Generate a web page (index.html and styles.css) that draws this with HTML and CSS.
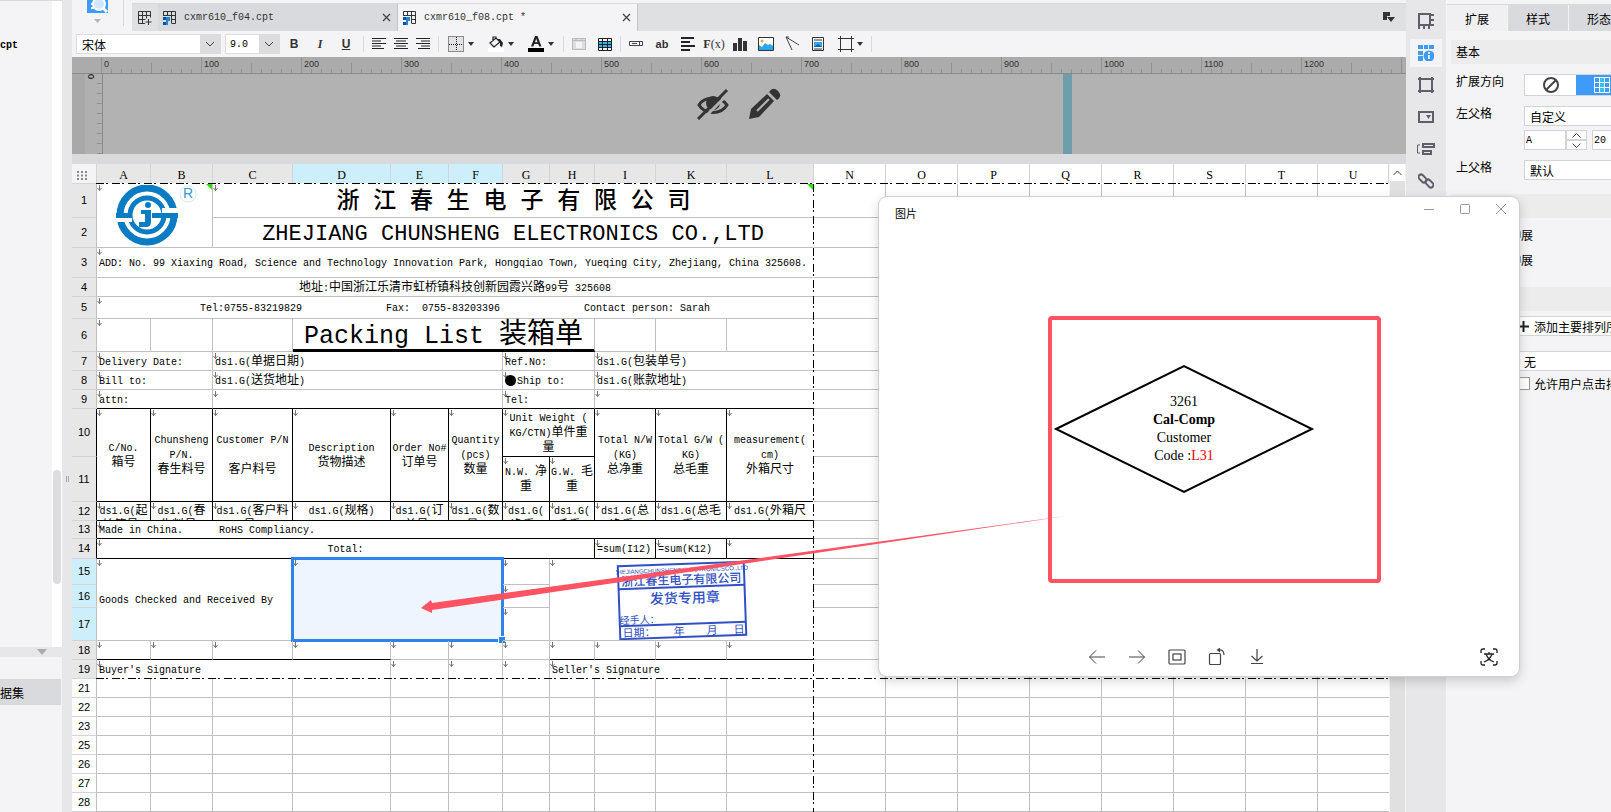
FILE: index.html
```html
<!DOCTYPE html>
<html lang="zh-CN">
<head>
    <meta charset="UTF-8">
    <meta name="viewport" content="width=device-width, initial-scale=1.0">
    <title>cxmr610_f08.cpt</title>
    <link rel="stylesheet" href="styles.css">
</head>
<body>
    <div class="app">
        <!-- File tree -->
        <aside class="tree">
            <div class="tree-files">
                <div class="tree-list"><b class="mono">cpt</b></div>
                <div class="tree-scroll"><div class="tree-thumb"></div></div>
            </div>
            <div class="tree-split"><svg width="10" height="6" viewBox="0 0 10 6"><path d="M0 0h10L5 6z" fill="#aaa"/></svg></div>
            <div class="tree-data"><button class="dataset">据集</button></div>
        </aside>
        <div class="splitter"><i></i><i></i></div>

        <main class="main">
            <div class="top">
                <button class="preview" aria-label="预览">
                    <svg width="22" height="26" viewBox="0 0 22 26"><rect width="21" height="13" fill="#3f9bfa"/><path d="M4 4h6M4 8h4" stroke="#fff" stroke-width="2"/><circle cx="12" cy="4" r="6" fill="#cfe6fb" stroke="#fff" stroke-width="2"/><path d="M16 8l4 4" stroke="#fff" stroke-width="3"/><path d="M7 19h7l-3.500 4z" fill="#b4b4b6"/></svg>
                </button>
                <div class="tabs">
                    <button class="tab-new" aria-label="新建">
                        <svg width="14" height="14" viewBox="0 0 14 14" fill="none" stroke="#333"><path d="M7 12.500H.5V.5h12v6M.5 4.500h12M.5 8.500h7M4.500 .5v12M8.500 .5v7M10.500 8v6M7.500 11h6"/></svg>
                    </button>
                    <button class="tab">
                        <svg width="14" height="14" viewBox="0 0 14 14" fill="none" stroke="#333"><path d="M.5 5V.5h12v12H9M.5 4.500h12M8.500 8.500h4M4.500 .5v4M8.500 .5v12"/><path d="M0 6h3v3H0zM1 11h2v3H0v-3z" fill="#0e4f9e" stroke="none"/><path d="M3 6h4v4H5v4H3z" fill="#1f86dc" stroke="none"/></svg>
                        <span class="mono">cxmr610_f04.cpt</span>
                        <svg class="tab-x" width="9" height="9" viewBox="0 0 9 9" stroke="#444" stroke-width="1.300"><path d="M1 1l7 7M8 1L1 8"/></svg>
                    </button>
                    <button class="tab active">
                        <svg width="14" height="14" viewBox="0 0 14 14" fill="none" stroke="#333"><path d="M.5 5V.5h12v12H9M.5 4.500h12M8.500 8.500h4M4.500 .5v4M8.500 .5v12"/><path d="M0 6h3v3H0zM1 11h2v3H0v-3z" fill="#0e4f9e" stroke="none"/><path d="M3 6h4v4H5v4H3z" fill="#1f86dc" stroke="none"/></svg>
                        <span class="mono">cxmr610_f08.cpt *</span>
                        <svg class="tab-x" width="9" height="9" viewBox="0 0 9 9" stroke="#444" stroke-width="1.300"><path d="M1 1l7 7M8 1L1 8"/></svg>
                    </button>
                    <button class="tab-menu" aria-label="标签列表">
                        <svg width="12" height="11" viewBox="0 0 12 11"><path d="M0 0h7v4H4v4H0zM4 5h8l-4 5z" fill="#333"/></svg>
                    </button>
                </div>
            </div>

            <div class="toolbar">
                <select class="font-name" aria-label="字体"><option>宋体</option></select>
                <select class="font-size" aria-label="字号"><option>9.0</option></select>
                <div class="tools letters">
                    <button><b>B</b></button>
                    <button><em>I</em></button>
                    <button><u>U</u></button>
                </div>
                <span class="sep"></span>
                <div class="tools aligns">
                    <button aria-label="左对齐"><svg width="16" height="12" viewBox="0 0 16 12" stroke="#222"><path d="M1 .5h14M1 3h9M1 5.500h14M1 8h9M1 10.500h12"/></svg></button>
                    <button aria-label="居中"><svg width="16" height="12" viewBox="0 0 16 12" stroke="#222"><path d="M1 .5h14M3 3h10M1 5.500h14M3 8h10M1 10.500h14"/></svg></button>
                    <button aria-label="右对齐"><svg width="16" height="12" viewBox="0 0 16 12" stroke="#222"><path d="M1 .5h14M6 3h9M1 5.500h14M6 8h9M3 10.500h12"/></svg></button>
                </div>
                <span class="sep"></span>
                <div class="tools drops">
                    <button aria-label="边框"><svg width="16" height="16" viewBox="0 0 16 16"><path d="M1 1h14v14H1z" fill="#e2e2e4"/><path d="M.5 .5h15v15H.5zM8.500 1v14M1 8.500h14" fill="none" stroke="#222" stroke-dasharray="1 1"/></svg><i class="tri"></i></button>
                    <button aria-label="填充"><svg width="16" height="16" viewBox="0 0 16 16"><rect y="12" width="16" height="4" fill="#fff"/><path d="M2 7l6-5 4 4-6 5zM5 5V1h3v2" fill="none" stroke="#222" stroke-width="1.200"/><path d="M9 3h3l3 4-1 4-2-1V6z" fill="#222"/></svg><i class="tri"></i></button>
                    <button aria-label="字体颜色"><svg width="16" height="16" viewBox="0 0 16 16"><rect y="12" width="16" height="4"/><path d="M3 10.500L7 0h2.500l4 10.500h-2.300l-1-2.500H6.300l-1 2.500zM7 6.200h2.500L8.200 2.800z" fill="#222"/></svg><i class="tri"></i></button>
                </div>
                <span class="sep"></span>
                <div class="tools">
                    <button aria-label="单元格"><svg width="16" height="16" viewBox="0 0 16 16"><path d="M1.500 2.500h13v11h-13z" fill="#ddd" stroke="#bbb"/><path d="M1 4.500h14M5 2v2M11 2v2" stroke="#bbb"/><rect x="5" y="6" width="6" height="6" fill="#f4f4f6"/></svg></button>
                    <button aria-label="表格"><svg width="16" height="16" viewBox="0 0 16 16"><rect x="1" y="5" width="14" height="7" fill="#38b4f5"/><path d="M1.500 2.500h13v12h-13zM1 5.500h14M1 8.500h14M1 11.500h14M5.500 2v12M10.500 2v12" fill="none" stroke="#222"/></svg></button>
                </div>
                <span class="sep"></span>
                <div class="tools">
                    <button aria-label="文本框"><svg width="16" height="16" viewBox="0 0 16 16" fill="none" stroke="#444"><path d="M1.500 5.500h13v4h-13zM4 7.500h5M11.500 5v5"/></svg></button>
                    <button class="ab"><b>ab</b></button>
                    <button aria-label="段落"><svg width="16" height="16" viewBox="0 0 16 16" stroke="#222" stroke-width="2"><path d="M1 2h13M1 6h9M1 10h14M1 14h9"/></svg></button>
                    <button class="fx"><b>F</b>(x)</button>
                    <button aria-label="图表"><svg width="16" height="16" viewBox="0 0 16 16"><path d="M1 7h4v8H1zM6 2h4v13H6zM11 5h4v10h-4z" fill="#333"/></svg></button>
                    <button aria-label="图片"><svg width="16" height="16" viewBox="0 0 16 16"><path d="M.5 1.500h15v13H.5z" fill="#fff" stroke="#333"/><path d="M1 14V9l3 2 3-4 3 2 2-1 3 2v4z" fill="#2fa5ec"/><circle cx="4" cy="5" r="1.500" fill="#f3a73b"/></svg></button>
                    <button aria-label="斜线"><svg width="16" height="16" viewBox="0 0 16 16" fill="none" stroke="#444"><path d="M2 1l6 13M2 1l13 8M2 1h3"/></svg></button>
                    <button aria-label="子报表"><svg width="16" height="16" viewBox="0 0 16 16"><path d="M2.500 1.500h11v13h-11z" fill="#fff" stroke="#333"/><path d="M4 4h8M4 13h8" stroke="#333"/><path d="M4 6h8v5H4z" fill="#38a4ef"/><path d="M4 11l4-3 4 3z" fill="#155fa8"/></svg></button>
                    <button class="float" aria-label="悬浮"><svg width="16" height="16" viewBox="0 0 16 16" fill="none" stroke="#333"><path d="M2.500 0v16M13.500 0v16M0 2.500h16M0 13.500h16"/></svg><i class="tri"></i></button>
                </div>
                <span class="sep"></span>
            </div>

            <!-- Parameter pane with rulers -->
            <div class="pane">
                <div class="ruler">
                    <span>0</span><span>100</span><span>200</span><span>300</span><span>400</span><span>500</span><span>600</span><span>700</span><span>800</span><span>900</span><span>1000</span><span>1100</span><span>1200</span><span></span>
                </div>
                <div class="pane-body">
                    <div class="vruler"><span>0</span></div>
                    <div class="pane-canvas">
                        <button aria-label="隐藏">
                            <svg width="32" height="32" viewBox="0 0 32 32"><path d="M2 17C7 8 24 8 30 17C24 27 8 27 2 17z" fill="none" stroke="#333" stroke-width="3"/><circle cx="16" cy="15" r="7" fill="#333"/><path d="M4 33L33 4" stroke="#b2b2b2" stroke-width="3"/><path d="M1 31L30 2" stroke="#333" stroke-width="3"/></svg>
                        </button>
                        <button aria-label="编辑">
                            <svg width="32" height="32" viewBox="0 0 32 32"><path d="M0 31l2-10L18 6l7 7L10 29z" fill="#333"/><path d="M20 4q4-6 9-1t-1 9z" fill="#333"/><path d="M8 23L20 11" stroke="#b2b2b2" stroke-width="2"/></svg>
                        </button>
                    </div>
                    <div class="pane-edge"></div>
                    <div class="pane-rest"></div>
                </div>
            </div>

            <!-- Report sheet -->
            <div class="sheet-wrap">
                <div class="sheet">
                    <table class="grid">
                        <colgroup>
                            <col class="c-no"><col class="c-a"><col class="c-b"><col class="c-c"><col class="c-d"><col class="c-e"><col class="c-f"><col class="c-g"><col class="c-h"><col class="c-i"><col class="c-k"><col class="c-l">
                            <col class="c-n"><col class="c-n"><col class="c-n"><col class="c-n"><col class="c-n"><col class="c-n"><col class="c-n"><col>
                        </colgroup>
                        <thead>
                            <tr>
                                <th class="corner"><svg width="11" height="9" viewBox="0 0 11 9" stroke="#888" stroke-width="2" stroke-dasharray="2 2"><path d="M0 1h11M0 4.500h11M0 8h11"/></svg></th>
                                <th>A</th><th>B</th><th>C</th><th class="on">D</th><th class="on">E</th><th class="on">F</th><th>G</th><th>H</th><th>I</th><th>K</th><th>L</th>
                                <th class="out">N</th><th class="out">O</th><th class="out">P</th><th class="out">Q</th><th class="out">R</th><th class="out">S</th><th class="out">T</th><th class="out">U</th>
                            </tr>
                        </thead>
                        <tbody>
                            <tr class="h34">
                                <th>1</th>
                                <td class="m logo-cell" colspan="2" rowspan="2">
                                    <svg width="106" height="62" viewBox="0 0 106 62">
                                        <g fill="none" stroke="#0a7cc4">
                                            <circle cx="50" cy="30" r="27" stroke-width="7"/>
                                            <circle cx="50" cy="30" r="17" stroke-width="5"/>
                                        </g>
                                        <path d="M65 23h18v5H65zM17 33h18v4H17z" fill="#fff"/>
                                        <path d="M19 28h16v5H19zM55 28h26v5H55z" fill="#0a7cc4"/>
                                        <circle cx="51" cy="20" r="3" fill="#0a7cc4"/>
                                        <path d="M44 25h10v12q0 5-5 5h-7v-5h6v-8h-4z" fill="#0a7cc4"/>
                                        <circle cx="91" cy="9" r="8" fill="none" stroke="#d5e9f5"/>
                                        <text x="86" y="13" class="reg">R</text>
                                    </svg>
                                    <i class="flag"></i>
                                </td>
                                <td class="m name-zh" colspan="9">浙 江 春 生 电 子 有 限 公 司<i class="flag"></i></td>
                                <td class="rest" colspan="8"></td>
                            </tr>
                            <tr class="h30"><th>2</th><td class="name-en" colspan="9">ZHEJIANG CHUNSHENG ELECTRONICS CO.,LTD</td><td class="rest" colspan="8"></td></tr>
                            <tr class="h30"><th>3</th><td class="m" colspan="11">ADD: No. 99 Xiaxing Road, Science and Technology Innovation Park, Hongqiao Town, Yueqing City, Zhejiang, China 325608.</td><td class="rest" colspan="8"></td></tr>
                            <tr><th>4</th><td class="mid" colspan="11"><span class="zh">地址</span>:<span class="zh">中国浙江乐清市虹桥镇科技创新园霞兴路</span>99<span class="zh">号</span> 325608</td><td class="rest" colspan="8"></td></tr>
                            <tr class="h22"><th>5</th><td class="m mid" colspan="11">Tel:0755-83219829              Fax:  0755-83203396              Contact person: Sarah</td><td class="rest" colspan="8"></td></tr>
                            <tr class="h33"><th>6</th><td class="m"></td><td></td><td></td><td class="doc-title" colspan="5">Packing List <span>装箱单</span></td><td></td><td></td><td></td><td class="rest" colspan="8"></td></tr>
                            <tr><th>7</th><td class="m" colspan="2">Delivery Date:</td><td class="m" colspan="4">ds1.G(<span class="zh">单据日期</span>)</td><td class="m" colspan="2">Ref.No:</td><td class="m" colspan="3">ds1.G(<span class="zh">包装单号</span>)</td><td class="rest" colspan="8"></td></tr>
                            <tr><th>8</th><td class="m" colspan="2">Bill to:</td><td class="m" colspan="4">ds1.G(<span class="zh">送货地址</span>)</td><td class="m" colspan="2"><i class="dot"></i>Ship to:</td><td class="m" colspan="3">ds1.G(<span class="zh">账款地址</span>)</td><td class="rest" colspan="8"></td></tr>
                            <tr class="kb"><th>9</th><td class="m" colspan="2">attn:</td><td class="m" colspan="4"></td><td class="m" colspan="2">Tel:</td><td class="m" colspan="3"></td><td class="rest" colspan="8"></td></tr>
                            <tr class="h48 black">
                                <th>10</th>
                                <td class="m mid" rowspan="2">C/No.<br><span class="zh">箱号</span></td>
                                <td class="m mid" rowspan="2">Chunsheng<br>P/N.<br><span class="zh">春生料号</span></td>
                                <td class="m mid" rowspan="2">Customer P/N<br><br><span class="zh">客户料号</span></td>
                                <td class="m mid" rowspan="2">Description<br><span class="zh">货物描述</span></td>
                                <td class="m mid" rowspan="2">Order No#<br><span class="zh">订单号</span></td>
                                <td class="m mid" rowspan="2">Quantity<br>(pcs)<br><span class="zh">数量</span></td>
                                <td class="m mid" colspan="2">Unit Weight (<br>KG/CTN)<span class="zh">单件重</span><br><span class="zh">量</span></td>
                                <td class="m mid" rowspan="2">Total N/W<br>(KG)<br><span class="zh">总净重</span></td>
                                <td class="m mid" rowspan="2">Total G/W (<br>KG)<br><span class="zh">总毛重</span></td>
                                <td class="m mid" rowspan="2">measurement(<br>cm)<br><span class="zh">外箱尺寸</span></td>
                                <td class="rest" colspan="8"></td>
                            </tr>
                            <tr class="h45 black"><th>11</th><td class="m mid">N.W. <span class="zh">净</span><br><span class="zh">重</span></td><td class="m mid">G.W. <span class="zh">毛</span><br><span class="zh">重</span></td><td class="rest" colspan="8"></td></tr>
                            <tr class="black">
                                <th>12</th>
                                <td class="m mid"><div class="clip">ds1.G(<span class="zh">起<br>始箱号</span>)</div></td>
                                <td class="m mid"><div class="clip">ds1.G(<span class="zh">春<br>生料号</span>)</div></td>
                                <td class="m mid"><div class="clip">ds1.G(<span class="zh">客户料<br>号</span>)</div></td>
                                <td class="m mid"><div class="clip">ds1.G(<span class="zh">规格</span>)</div></td>
                                <td class="m mid"><div class="clip">ds1.G(<span class="zh">订<br>单号</span>)</div></td>
                                <td class="m mid"><div class="clip">ds1.G(<span class="zh">数<br>量</span>)</div></td>
                                <td class="m mid"><div class="clip">ds1.G(<br><span class="zh">净重</span>)</div></td>
                                <td class="m mid"><div class="clip">ds1.G(<br><span class="zh">毛重</span>)</div></td>
                                <td class="m mid"><div class="clip">ds1.G(<span class="zh">总<br>净重</span>)</div></td>
                                <td class="m mid"><div class="clip">ds1.G(<span class="zh">总毛<br>重</span>)</div></td>
                                <td class="m mid"><div class="clip">ds1.G(<span class="zh">外箱尺<br>寸</span>)</div></td>
                                <td class="rest" colspan="8"></td>
                            </tr>
                            <tr class="h18 black"><th>13</th><td class="m" colspan="11">Made in China.      RoHS Compliancy.</td><td class="rest" colspan="8"></td></tr>
                            <tr class="h20 black"><th>14</th><td class="m mid" colspan="8">Total:</td><td class="m">=sum(I12)</td><td class="m">=sum(K12)</td><td class="m"></td><td class="rest" colspan="8"></td></tr>
                            <tr class="h26">
                                <th class="on">15</th>
                                <td class="m" colspan="3" rowspan="3">Goods Checked and Received By</td>
                                <td class="m picked" colspan="3" rowspan="3"><div class="selection"></div></td>
                                <td class="m"></td>
                                <td class="m stamp-cell" colspan="4" rowspan="3">
                                    <svg class="stamp" width="132" height="80" viewBox="0 0 132 80">
                                        <g transform="rotate(-2 66 40)">
                                            <g fill="none" stroke="#3150c4" stroke-width="2">
                                                <rect x="3" y="4" width="126" height="73"/>
                                                <path d="M3 27h126M3 64h126"/>
                                            </g>
                                            <g class="stamp-text">
                                                <text x="66" y="12" class="s6">ZHEJIANGCHUNSHENGELECTRONICSCO.,LTD</text>
                                                <text x="66" y="24" class="s12">浙江春生电子有限公司</text>
                                                <text x="69" y="43" class="s14">发货专用章</text>
                                                <text x="23" y="62" class="s10">经手人：</text>
                                                <text x="22" y="75" class="s11">日期：</text>
                                                <text x="62" y="75" class="s11">年</text>
                                                <text x="95" y="75" class="s11">月</text>
                                                <text x="122" y="75" class="s11">日</text>
                                            </g>
                                        </g>
                                    </svg>
                                </td>
                                <td class="rest" colspan="8"></td>
                            </tr>
                            <tr class="h23"><th class="on">16</th><td class="m"></td><td class="rest" colspan="8"></td></tr>
                            <tr class="h33"><th class="on">17</th><td class="m"></td><td class="rest" colspan="8"></td></tr>
                            <tr><th>18</th><td class="m sign"></td><td class="m sign"></td><td class="m sign"></td><td class="m sign"></td><td class="m"></td><td class="m"></td><td class="m"></td><td class="m sign"></td><td class="m sign"></td><td class="m sign"></td><td class="m sign"></td><td class="rest" colspan="8"></td></tr>
                            <tr><th>19</th><td class="m" colspan="4">Buyer's Signature</td><td class="m"></td><td class="m"></td><td class="m"></td><td class="m" colspan="4">Seller's Signature</td><td class="rest" colspan="8"></td></tr>
                            <tr><th class="out">21</th><td></td><td></td><td></td><td></td><td></td><td></td><td></td><td></td><td></td><td></td><td></td><td class="rest" colspan="8"></td></tr>
                            <tr><th class="out">22</th><td></td><td></td><td></td><td></td><td></td><td></td><td></td><td></td><td></td><td></td><td></td><td class="rest" colspan="8"></td></tr>
                            <tr><th class="out">23</th><td></td><td></td><td></td><td></td><td></td><td></td><td></td><td></td><td></td><td></td><td></td><td class="rest" colspan="8"></td></tr>
                            <tr><th class="out">25</th><td></td><td></td><td></td><td></td><td></td><td></td><td></td><td></td><td></td><td></td><td></td><td class="rest" colspan="8"></td></tr>
                            <tr><th class="out">26</th><td></td><td></td><td></td><td></td><td></td><td></td><td></td><td></td><td></td><td></td><td></td><td class="rest" colspan="8"></td></tr>
                            <tr><th class="out">27</th><td></td><td></td><td></td><td></td><td></td><td></td><td></td><td></td><td></td><td></td><td></td><td class="rest" colspan="8"></td></tr>
                            <tr><th class="out">28</th><td></td><td></td><td></td><td></td><td></td><td></td><td></td><td></td><td></td><td></td><td></td><td class="rest" colspan="8"></td></tr>
                        </tbody>
                    </table>
                    <!-- Page break lines -->
                    <div class="brk brk-top"></div>
                    <div class="brk brk-bottom"></div>
                    <div class="brk-v"></div>
                </div>
                <div class="vscroll">
                    <button aria-label="向上"><svg width="9" height="6" viewBox="0 0 9 6" fill="none" stroke="#444"><path d="M.5 5L4.500 1l4 4"/></svg></button>
                    <div class="vthumb"></div>
                </div>
            </div>
        </main>

        <!-- Property switcher -->
        <nav class="side">
            <button aria-label="单元格元素"><svg width="16" height="16" viewBox="0 0 16 16" fill="none" stroke="#5e5f6b" stroke-width="2"><path d="M1 16V1h11v11H1M12 2h4M12 7h4M12 12h4M6 12v4M11 12v4"/></svg></button>
            <button class="active" aria-label="单元格属性"><svg width="16" height="16" viewBox="0 0 16 16" fill="#3f9bfa"><path d="M0 0h5v4H0zM6 0h4v4H6zM11 0h5v4h-5zM0 6h5v4H0zM0 11h5v5H0z"/><circle cx="11" cy="11" r="5.500"/><path d="M11 10v4M11 7v2" stroke="#fff" stroke-width="1.600"/></svg></button>
            <button aria-label="悬浮元素"><svg width="16" height="16" viewBox="0 0 16 16" fill="none" stroke="#5e5f6b" stroke-width="2"><path d="M2 2h12v12H2z"/><path d="M0 2h4M12 2h4M0 14h4M12 14h4M2 0v4M14 0v4M2 12v4M14 12v4"/></svg></button>
            <button aria-label="控件设置"><svg width="16" height="16" viewBox="0 0 16 16"><path d="M1 3h14v10H1z" fill="none" stroke="#5e5f6b" stroke-width="2"/><path d="M8 6h5l-2.500 4z" fill="#5e5f6b"/></svg></button>
            <button aria-label="条件属性"><svg width="18" height="14" viewBox="0 0 18 14" fill="none" stroke="#5e5f6b" stroke-width="2"><path d="M6 2h11v3H6zM6 9h8v3H6z"/><path d="M3 3H.5v8H3" stroke-width="1"/></svg></button>
            <button aria-label="超级链接"><svg width="16" height="16" viewBox="0 0 16 16" fill="none" stroke="#5e5f6b" stroke-width="2"><rect x="0" y="3" width="9" height="5" rx="2.500" transform="rotate(45 4.500 5.500)"/><rect x="7" y="8" width="9" height="5" rx="2.500" transform="rotate(45 11.500 10.500)"/></svg></button>
        </nav>

        <aside class="props">
            <div class="props-tabs"><button class="active">扩展</button><button>样式</button><button>形态</button></div>
            <div class="section first">基本</div>
            <div class="field">
                <span class="label">扩展方向</span>
                <div class="seg">
                    <button aria-label="不扩展"><svg width="16" height="16" viewBox="0 0 16 16" fill="none" stroke="#444" stroke-width="2"><circle cx="8" cy="8" r="7"/><path d="M3 13L13 3"/></svg></button>
                    <button class="active" aria-label="纵向"><svg width="16" height="16" viewBox="0 0 16 16" fill="none" stroke="#fff"><rect x="6" width="4" height="16" fill="#38c0f5" stroke="none"/><path d="M.5 .5h15v15H.5zM.5 5.500h15M.5 10.500h15M5.500 0v16M10.500 0v16"/></svg></button>
                </div>
            </div>
            <div class="field">
                <label class="label" for="left-parent">左父格</label>
                <select id="left-parent"><option>自定义</option></select>
            </div>
            <div class="spin-row">
                <input class="cell-col" value="A" aria-label="列">
                <div class="spin"><button aria-label="加"><svg width="9" height="5" viewBox="0 0 9 5" fill="none" stroke="#444"><path d="M.5 4.500l4-4 4 4"/></svg></button><button aria-label="减"><svg width="9" height="5" viewBox="0 0 9 5" fill="none" stroke="#444"><path d="M.5 .5l4 4 4-4"/></svg></button></div>
                <input class="cell-row" value="20" aria-label="行">
            </div>
            <div class="field">
                <label class="label" for="top-parent">上父格</label>
                <select id="top-parent"><option>默认</option></select>
            </div>
            <div class="section second"></div>
            <div class="stretch">伸展</div>
            <div class="stretch">伸展</div>
            <div class="section third"></div>
            <button class="add"><svg width="11" height="11" viewBox="0 0 11 11" stroke="#222" stroke-width="2"><path d="M5.500 0v11M0 5.500h11"/></svg>添加主要排列序</button>
            <select class="sort" aria-label="排序"><option>无</option></select>
            <label class="allow"><input type="checkbox">允许用户点击排序</label>
        </aside>
    </div>

    <!-- Picture viewer window -->
    <section class="viewer">
        <header>
            <h2>图片</h2>
            <button aria-label="最小化"><svg width="12" height="12" viewBox="0 0 12 12" fill="none" stroke="#999"><path d="M1 6.500h10"/></svg></button>
            <button aria-label="最大化"><svg width="12" height="12" viewBox="0 0 12 12" fill="none" stroke="#999"><rect x="1.500" y="1.500" width="9" height="9" rx="1"/></svg></button>
            <button aria-label="关闭"><svg width="12" height="12" viewBox="0 0 12 12" fill="none" stroke="#999"><path d="M1 1l10 10M11 1L1 11"/></svg></button>
        </header>
        <div class="picture">
            <div class="marked">
                <svg class="diamond" width="262" height="130" viewBox="0 0 262 130"><path d="M3 65L131 2l128 63-128 63z" fill="#fff" stroke="#000" stroke-width="2"/></svg>
                <p>3261<br><b>Cal-Comp</b><br>Customer<br>Code :<em>L31</em></p>
            </div>
        </div>
        <footer>
            <button aria-label="上一张"><svg width="18" height="18" viewBox="0 0 18 18" fill="none" stroke="#444"><path d="M17 9H1.500M8 2.500L1.500 9 8 15.500"/></svg></button>
            <button aria-label="下一张"><svg width="18" height="18" viewBox="0 0 18 18" fill="none" stroke="#444"><path d="M1 9h15.500M10 2.500L16.500 9 10 15.500"/></svg></button>
            <button aria-label="原始大小"><svg width="18" height="18" viewBox="0 0 18 18" fill="none" stroke="#444" stroke-width="1.200"><rect x="1" y="2" width="16" height="14" rx="1"/><rect x="5" y="6" width="8" height="6"/></svg></button>
            <button aria-label="旋转"><svg width="18" height="18" viewBox="0 0 18 18" fill="none" stroke="#444" stroke-width="1.200"><rect x="1.500" y="5.500" width="11" height="11" rx="1"/><path d="M10 2q6-1 6 5"/><path d="M12 -.5L8.500 2 12 4.500z" fill="#444" stroke="none"/></svg></button>
            <button aria-label="下载"><svg width="18" height="18" viewBox="0 0 18 18" fill="none" stroke="#444" stroke-width="1.200"><path d="M9 1v12M3.500 8L9 13l5.500-5M3 15.500h12"/></svg></button>
            <button class="translate" aria-label="翻译"><svg width="18" height="18" viewBox="0 0 18 18" fill="none" stroke="#222" stroke-width="1.300"><path d="M1 5V3q0-2 2-2h2M13 1h2q2 0 2 2v2M17 13v2q0 2-2 2h-2M5 17H3q-2 0-2-2v-2M4 6h10M9 4v2M12 6q-2 6-8 8M6 6q2 6 8 8"/></svg></button>
        </footer>
    </section>

    <!-- Red callout arrow from the picture to the selected cell -->
    <svg class="callout" width="648" height="100" viewBox="0 0 648 100"><path d="M1 94L11 86l1 3L646 2 12 96v3z" fill="#ff5263"/></svg>
</body>
</html>
```
FILE: styles.css
```css
* {
    margin: 0;
    padding: 0;
    box-sizing: border-box;
}

body {
    font-family: "Noto Sans CJK SC", sans-serif;
    font-size: 12px;
    color: #000;
    background: #f4f4f6;
    overflow: hidden;
}

button, select, input {
    font: inherit;
    color: inherit;
    border: none;
    background: none;
    border-radius: 0;
}

select {
    appearance: none;
}

svg {
    display: block;
    flex: none;
}

.mono {
    font-family: "Liberation Mono", monospace;
    font-size: 10px;
}

.app {
    display: flex;
    height: 100vh;
}

/* left tree */
.tree {
    width: 62px;
    flex: none;
    display: flex;
    flex-direction: column;
    border-top: 1px solid #d9dadd;
}

.tree-files {
    height: 646px;
    display: flex;
}

.tree-list {
    flex: 1;
    padding-top: 34px;
    line-height: 16px;
}

.tree-scroll {
    width: 10px;
    padding-top: 469px;
    background: #fff;
}

.tree-thumb {
    width: 8px;
    height: 114px;
    margin: 0 auto;
    border-radius: 4px;
    background: #dcdcdf;
}

.tree-split {
    height: 10px;
    padding: 2px 0 0 37px;
    background: #e7e7e9;
}

.tree-data {
    flex: 1;
    padding-top: 22px;
}

.dataset {
    display: block;
    width: 61px;
    height: 26px;
    text-align: left;
    background: #d9dadd;
}

.splitter {
    width: 10px;
    flex: none;
    display: flex;
    justify-content: center;
    align-items: center;
    gap: 1px;
    padding-top: 146px;
    background: #e7e7e9;
}

.splitter i {
    width: 1px;
    height: 6px;
    background: #aaa;
}

/* centre */
.main {
    flex: 1;
    min-width: 0;
    display: flex;
    flex-direction: column;
}

.top {
    display: flex;
    height: 31px;
}

.preview {
    width: 52px;
    height: 26px;
    padding-left: 15px;
    border-right: 1px solid #d9dadd;
}

.tabs {
    flex: 1;
    display: flex;
    margin: 3px 0 0 8px;
    background: #dfe0e2;
    border-top: 1px solid #d9dadd;
}

.tab-new {
    width: 26px;
    padding-left: 6px;
}

.tab {
    width: 240px;
    display: flex;
    align-items: center;
    gap: 7px;
    padding: 0 6px 0 5px;
    color: #333;
    background: #d9dadd;
    border-right: 1px solid #c4c4c8;
}

.tab.active {
    background: #f4f4f6;
}

.tab-x {
    margin-left: auto;
}

.tab-menu {
    margin-left: auto;
    padding-right: 11px;
}

.toolbar {
    height: 26px;
    display: flex;
    align-items: center;
    padding: 0 4px;
}

.font-name, .font-size {
    height: 20px;
    border: 1px solid #dcdcdf;
    background: #fff url("data:image/svg+xml,%3Csvg xmlns='http://www.w3.org/2000/svg' width='20' height='18'%3E%3Crect width='20' height='18' fill='%23dcdcdf'/%3E%3Cpath d='M6 7l4 4 4-4' fill='none' stroke='%23444'/%3E%3C/svg%3E") no-repeat right center;
}

.font-name {
    width: 145px;
    padding-left: 5px;
}

.font-size {
    width: 55px;
    margin: 0 4px;
    padding-left: 4px;
    font-family: "Liberation Mono", monospace;
    font-size: 10px;
}

.sep {
    width: 1px;
    height: 16px;
    margin: 0 7px;
    background: #d9dadd;
}

.tools {
    display: flex;
    gap: 10px;
}

.tools button {
    width: 16px;
    height: 20px;
    display: flex;
    align-items: center;
    justify-content: center;
    color: #333;
}

.letters {
    gap: 6px;
}

.letters button {
    width: 20px;
    font-family: "Liberation Sans", sans-serif;
    font-weight: bold;
}

.letters em {
    font-family: "Liberation Serif", serif;
}

.aligns {
    gap: 6px;
}

.tools.drops button {
    width: 30px;
    gap: 4px;
}

.tools .float {
    width: 28px;
    gap: 3px;
}

.tri {
    border: 3px solid transparent;
    border-top: 4px solid #333;
    border-bottom: none;
}

.tools .ab {
    font-family: "Liberation Sans", sans-serif;
    font-size: 11px;
}

.tools .fx {
    font-family: "Liberation Serif", serif;
    font-size: 12px;
}

/* parameter pane */
.pane {
    height: 107px;
    display: flex;
    flex-direction: column;
    background: #b2b2b2;
    border-bottom: 10px solid #d9dadd;
}

.ruler {
    height: 17px;
    display: flex;
    overflow: hidden;
    padding-left: 29px;
    border-bottom: 1px solid #8c8c8c;
    background:
        repeating-linear-gradient(to right, #929292 0 1px, transparent 1px 100px) 29px 0 / 100% 16px no-repeat,
        repeating-linear-gradient(to right, #929292 0 1px, transparent 1px 50px) 29px 6px / 100% 10px no-repeat,
        repeating-linear-gradient(to right, #929292 0 1px, transparent 1px 10px) 29px 12px / 100% 5px no-repeat,
        #ababab;
}

.ruler span {
    width: 100px;
    flex: none;
    padding-left: 3px;
    font: 9px/14px "Liberation Sans", sans-serif;
    color: #333;
}

.pane-body {
    flex: 1;
    display: flex;
}

.vruler {
    width: 31px;
    border-right: 1px solid #8c8c8c;
    background: repeating-linear-gradient(to bottom, transparent 0 9px, #929292 9px 10px) 25px 0 / 5px 100% no-repeat, linear-gradient(to right, #a8a8a8 13px, #b0b0b0 13px);
}

.vruler span {
    display: block;
    width: 12px;
    margin-left: 13px;
    font: 9px/12px "Liberation Sans", sans-serif;
    writing-mode: vertical-rl;
    transform: rotate(180deg);
}

.pane-canvas {
    width: 960px;
    display: flex;
    gap: 20px;
    padding: 14px 0 0 594px;
}

.pane-canvas button {
    width: 32px;
    height: 32px;
}

.pane-edge {
    width: 9px;
    background: #6e9ea9;
}

.pane-rest {
    flex: 1;
}

/* report grid */
.sheet-wrap {
    flex: 1;
    min-height: 0;
    display: flex;
}

.sheet {
    position: relative;
    flex: 1;
    overflow: hidden;
    background: #fff;
}

.grid {
    width: 100%;
    table-layout: fixed;
    border-collapse: separate;
    border-spacing: 0;
    font-family: "Liberation Mono", "Noto Sans CJK SC", monospace;
    font-size: 10px;
    line-height: 15px;
}

.c-no { width: 25px; }
.c-a { width: 54px; }
.c-b { width: 62px; }
.c-c { width: 80px; }
.c-d { width: 98px; }
.c-e { width: 58px; }
.c-f { width: 54px; }
.c-g { width: 47px; }
.c-h { width: 45px; }
.c-i { width: 61px; }
.c-k { width: 71px; }
.c-l { width: 87px; }
.c-n { width: 72px; }

.grid tr { height: 19px; }
.grid thead tr, .grid .h20 { height: 20px; }
.grid .h18 { height: 18px; }
.grid .h22 { height: 22px; }
.grid .h23 { height: 23px; }
.grid .h26 { height: 26px; }
.grid .h30 { height: 30px; }
.grid .h33 { height: 33px; }
.grid .h34 { height: 34px; }
.grid .h45 { height: 45px; }
.grid .h48 { height: 48px; }

.grid th {
    font-family: "Liberation Sans", sans-serif;
    font-size: 11px;
    font-weight: normal;
    background: #e7e7e7;
    border-right: 1px solid #d4d4d8;
    border-bottom: 1px solid #d4d4d8;
}

.grid thead th {
    padding-top: 3px;
    font-family: "Liberation Serif", serif;
    font-size: 12px;
}

.grid tbody th {
    border-right-color: #c0c0c0;
}

.grid th.on {
    background: #cdeffb;
}

.grid th.out {
    background: #fff;
}

.grid th.corner {
    padding-left: 5px;
    background: #f4f4f6;
}

.grid td {
    position: relative;
    padding: 2px 1px 0 2px;
    white-space: pre;
    border-right: 1px solid #c0c0c0;
    border-bottom: 1px solid #c0c0c0;
}

.grid .m {
    background: url("data:image/svg+xml,%3Csvg xmlns='http://www.w3.org/2000/svg' width='5' height='6'%3E%3Cpath d='M2.500 0v6M.5 3l2 2.500 2-2.500' fill='none' stroke='%23777'/%3E%3C/svg%3E") no-repeat 0 1px;
}

.grid .mid {
    padding: 2px 0 0;
    text-align: center;
}

.zh {
    font-family: "Noto Sans CJK SC", sans-serif;
    font-size: 12px;
    line-height: 10px;
}

.grid .rest {
    padding: 0;
    border-right: none;
    background: repeating-linear-gradient(to right, transparent 0 71px, #c0c0c0 71px 72px);
}

.grid .kb td:not(.rest), .grid .black td:not(.rest) {
    border-bottom-color: #000;
}

.grid .black td:not(.rest), .grid .black th {
    border-right-color: #000;
}

.grid .h48 .mid, .grid .h45 .mid {
    padding-top: 1px;
}

.grid .sign {
    border-bottom-color: #000;
}

.clip {
    height: 16px;
    overflow: hidden;
}

.grid .logo-cell, .grid .stamp-cell {
    padding: 0;
    white-space: normal;
}

.reg {
    font: 14px "Liberation Sans", sans-serif;
    fill: #3b96cc;
}

.flag {
    position: absolute;
    top: 0;
    right: 0;
    border: 3px solid transparent;
    border-top-color: #2de000;
    border-right-color: #2de000;
}

.grid .name-zh {
    padding-top: 4px;
    font-size: 23px;
    font-weight: 500;
    line-height: 29px;
    text-align: center;
}

.grid .name-en {
    padding: 4px 0 0;
    font-size: 22px;
    line-height: 25px;
    text-align: center;
}

.grid .doc-title {
    padding: 6px 0 0;
    font-size: 25px;
    line-height: 24px;
    text-align: center;
    border-bottom: 3px solid #000;
}

.doc-title span {
    font-size: 28px;
    line-height: 10px;
}

.dot {
    display: inline-block;
    width: 11px;
    height: 11px;
    margin-right: 1px;
    border-radius: 50%;
    background: #000;
    vertical-align: -2px;
}

.selection {
    position: absolute;
    inset: -2px;
    border: 3px solid #2f83ee;
    background: rgba(47, 131, 238, 0.08);
}

.selection::after {
    content: "";
    position: absolute;
    right: -4px;
    bottom: -4px;
    width: 6px;
    height: 6px;
    background: #2f83ee;
    border: 1px solid #fff;
    border-width: 1px 0 0 1px;
}

.grid .stamp {
    margin-left: 66px;
}

.stamp-text {
    font-family: "Noto Sans CJK SC", sans-serif;
    text-anchor: middle;
    fill: #3150c4;
}

.s6 { font: 6px "Liberation Sans", sans-serif; }
.s10 { font-size: 10px; }
.s11 { font-size: 11px; }
.s12 { font-size: 12px; font-weight: 500; }
.s14 { font-size: 14px; font-weight: 500; }

.brk {
    position: absolute;
    left: 24px;
    right: 0;
    height: 1px;
    background: repeating-linear-gradient(to right, #000 0 8px, #fff 8px 10px, #000 10px 12px, #fff 12px 16px);
}

.brk-top {
    top: 19px;
}

.brk-bottom {
    top: 514px;
}

.brk-v {
    position: absolute;
    left: 741px;
    top: 20px;
    bottom: 0;
    width: 1px;
    background: repeating-linear-gradient(to bottom, #000 0 8px, #fff 8px 10px, #000 10px 12px, #fff 12px 16px);
}

.vscroll {
    width: 17px;
    flex: none;
    display: flex;
    flex-direction: column;
    padding: 0 1px;
}

.vscroll button {
    height: 17px;
    display: flex;
    align-items: center;
    justify-content: center;
    background: #fff;
}

.vthumb {
    flex: 1;
    background: #e0e0e0;
}

/* right icon strip */
.side {
    width: 40px;
    flex: none;
    display: flex;
    flex-direction: column;
    align-items: center;
    gap: 4px;
    padding-top: 7px;
    background: #e7e7e9;
}

.side button {
    width: 32px;
    height: 28px;
    display: flex;
    align-items: center;
    justify-content: center;
}

.side .active {
    background: #f4f4f6;
}

/* property panel */
.props {
    width: 165px;
    flex: none;
    overflow: hidden;
    white-space: nowrap;
    padding-left: 1px;
}

.props-tabs {
    display: flex;
    gap: 1px;
    margin-top: 4px;
    border-top: 1px solid #d9dadd;
}

.props-tabs button {
    width: 60px;
    height: 26px;
    flex: none;
    background: #d9dadd;
}

.props-tabs .active {
    background: #f0f0f2;
}

.section {
    height: 24px;
    margin-left: 4px;
    padding-left: 5px;
    line-height: 24px;
    background: #ececec;
}

.first {
    margin-top: 9px;
    margin-bottom: 10px;
}

.second {
    margin-top: 14px;
    margin-bottom: 4px;
}

.third {
    margin-top: 15px;
    margin-bottom: 5px;
}

.field {
    display: flex;
    padding-left: 9px;
    margin-bottom: 4px;
}

.label {
    width: 68px;
    flex: none;
    line-height: 14px;
}

.seg {
    display: flex;
    width: 120px;
    flex: none;
    height: 22px;
    margin-bottom: 6px;
    background: #fff;
    border: 1px solid #d4d4d8;
}

.seg button {
    width: 51px;
    display: flex;
    align-items: center;
    justify-content: center;
}

.seg .active {
    background: #3f9bfa;
}

.props select {
    width: 130px;
    height: 20px;
    flex: none;
    padding-left: 5px;
    background: #fff;
    border: 1px solid #d4d4d8;
}

.spin-row {
    display: flex;
    padding-left: 77px;
    margin-bottom: 10px;
}

.spin-row input {
    height: 20px;
    width: 42px;
    flex: none;
    padding-left: 1px;
    font: 10px "Liberation Mono", monospace;
    background: #fff;
    border: 1px solid #d4d4d8;
}

.spin {
    width: 21px;
    flex: none;
    margin-right: 5px;
}

.spin button {
    width: 21px;
    height: 10px;
    display: flex;
    align-items: center;
    justify-content: center;
    background: #fff;
    border: 1px solid #d4d4d8;
}

.stretch {
    padding-left: 62px;
    line-height: 25px;
}

.add {
    display: flex;
    align-items: center;
    gap: 5px;
    width: 160px;
    height: 20px;
    margin: 0 0 15px 61px;
    padding-left: 9px;
    background: #fff;
    border: 1px solid #d4d4d8;
}

.props .sort {
    display: block;
    margin-left: 71px;
}

.allow {
    display: flex;
    align-items: center;
    gap: 4px;
    margin: 4px 0 0 70px;
}

.allow input {
    appearance: none;
    width: 13px;
    height: 13px;
    flex: none;
    background: #fff;
    border: 1px solid #999;
}

/* picture viewer */
.viewer {
    position: absolute;
    left: 879px;
    top: 197px;
    width: 640px;
    height: 479px;
    display: flex;
    flex-direction: column;
    background: #fff;
    border-radius: 8px;
    box-shadow: 0 0 0 1px #d0d0d0, 0 4px 12px rgba(0, 0, 0, 0.2);
}

.viewer header {
    display: flex;
    gap: 24px;
    padding: 6px 12px 0 16px;
}

.viewer h2 {
    flex: 1;
    font-size: 11px;
    font-weight: normal;
    line-height: 20px;
}

.viewer header button {
    height: 12px;
}

.picture {
    flex: 1;
    padding: 93px 0 0 169px;
}

.marked {
    display: grid;
    width: 333px;
    height: 267px;
    align-items: start;
    justify-items: start;
    padding: 44px 0 0 1px;
    border: 4px solid #ff5263;
    border-radius: 4px;
}

.marked > * {
    grid-area: 1 / 1;
}

.marked p {
    width: 262px;
    padding-top: 29px;
    text-align: center;
    font: 14px/18px "Liberation Serif", serif;
}

.marked em {
    font-style: normal;
    color: #f00;
}

.viewer footer {
    display: flex;
    gap: 22px;
    padding: 0 21px 10px 209px;
}

.translate {
    margin-left: auto;
}

/* callout arrow */
.callout {
    position: absolute;
    left: 420px;
    top: 514px;
}
```
